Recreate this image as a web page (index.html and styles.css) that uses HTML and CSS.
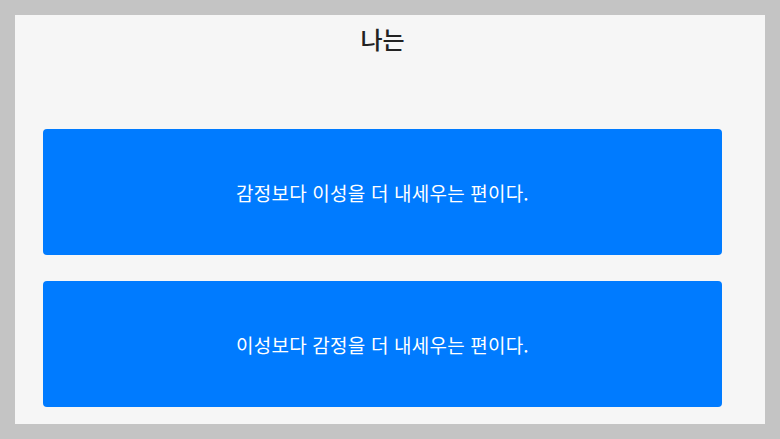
FILE: index.html
```html
<!DOCTYPE html>
<html lang="ko">
<head>
<meta charset="utf-8">
<title>나는</title>
<link rel="stylesheet" href="styles.css">
</head>
<body>
<main class="panel">
  <h1 class="title">나는</h1>
  <div class="choices">
    <button class="choice">감정보다 이성을 더 내세우는 편이다.</button>
    <button class="choice">이성보다 감정을 더 내세우는 편이다.</button>
  </div>
</main>
</body>
</html>
```
FILE: styles.css
```css
html, body {
  margin: 0;
  padding: 0;
}
body {
  background: #c4c4c4;
  padding: 15px;
  font-family: "Noto Sans CJK KR", "Noto Sans", sans-serif;
}
.panel {
  background: #f6f6f6;
  height: 409px;
  box-sizing: border-box;
  padding: 8px 43px 0 28px;
  display: flex;
  flex-direction: column;
}
.title {
  margin: 0;
  font-size: 24px;
  line-height: 32px;
  font-weight: 500;
  color: #222;
  text-align: center;
}
.choices {
  margin-top: 74px;
  display: flex;
  flex-direction: column;
  gap: 26px;
}
.choice {
  height: 126px;
  border: none;
  border-radius: 4px;
  background: #007bff;
  color: #fff;
  font-family: inherit;
  font-size: 19px;
  letter-spacing: 0.2px;
  padding: 0;
}
```
